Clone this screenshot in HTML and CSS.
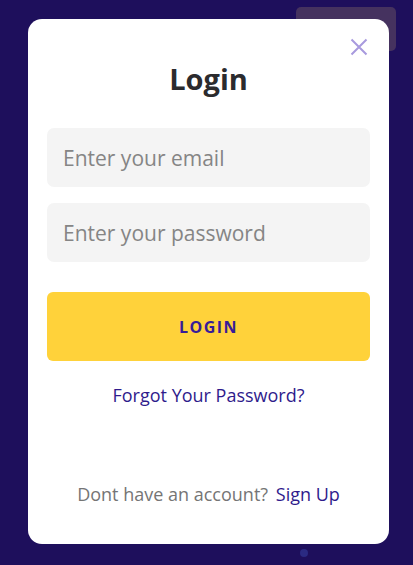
FILE: index.html
```html
<!DOCTYPE html>
<html>
<head>
<meta charset="utf-8">
<link rel="stylesheet" href="styles.css">
</head>
<body>
<div class="backdrop">
  <div class="bg-chip"></div>
  <div class="bg-dot"></div>
  <div class="modal">
    <button class="close" aria-label="Close">
      <svg width="18" height="18" viewBox="0 0 18 18"><path d="M1.5 1.5 L16.5 16.5 M16.5 1.5 L1.5 16.5" stroke="#a89ade" stroke-width="2" fill="none"/></svg>
    </button>
    <h1 class="title">Login</h1>
    <div class="field">Enter your email</div>
    <div class="field">Enter your password</div>
    <button class="login-btn">LOGIN</button>
    <a class="forgot">Forgot Your Password?</a>
    <p class="signup">Dont have an account? <a class="signup-link">Sign Up</a></p>
  </div>
</div>
</body>
</html>
```
FILE: styles.css
```css
html, body {
  margin: 0;
  padding: 0;
}
body {
  width: 413px;
  height: 565px;
  overflow: hidden;
  background: #1e0f5c;
  font-family: "Open Sans", "Noto Sans", sans-serif;
}
.backdrop {
  position: relative;
  width: 413px;
  height: 565px;
  padding: 19px 0 0 28px;
  box-sizing: border-box;
}
.bg-chip {
  position: absolute;
  left: 296px;
  top: 7px;
  width: 100px;
  height: 44px;
  border-radius: 5px;
  background: #45325f;
}
.bg-dot {
  position: absolute;
  left: 300px;
  top: 549px;
  width: 8px;
  height: 8px;
  border-radius: 50%;
  background: #2b2a82;
}
.modal {
  position: relative;
  width: 361px;
  height: 525px;
  background: #fff;
  border-radius: 14px;
  box-sizing: border-box;
  padding: 0 19px;
  display: flex;
  flex-direction: column;
  align-items: stretch;
}
.close {
  position: absolute;
  right: 21px;
  top: 19px;
  width: 18px;
  height: 18px;
  padding: 0;
  border: 0;
  background: none;
  display: flex;
}
.title {
  margin: 35px 0 0;
  height: 50px;
  line-height: 50px;
  text-align: center;
  font-size: 29px;
  font-weight: 700;
  color: #2b2b2e;
}
.field {
  margin-top: 24px;
  height: 59px;
  border-radius: 7px;
  background: #f4f4f4;
  display: flex;
  align-items: center;
  padding-left: 16px;
  font-size: 21px;
  color: #858585;
}
.field + .field {
  margin-top: 16px;
}
.login-btn {
  margin-top: 30px;
  height: 69px;
  border: 0;
  border-radius: 6px;
  background: #ffd23a;
  font-family: inherit;
  font-size: 16px;
  font-weight: 700;
  letter-spacing: 1.5px;
  color: #371c98;
}
.forgot {
  margin-top: 22px;
  text-align: center;
  font-size: 18px;
  color: #2f1b8c;
  line-height: 24px;
}
.signup {
  margin: 75px 0 0;
  text-align: center;
  font-size: 18px;
  line-height: 24px;
  color: #757575;
}
.signup-link {
  color: #2f1b8c;
  margin-left: 3px;
}
```
